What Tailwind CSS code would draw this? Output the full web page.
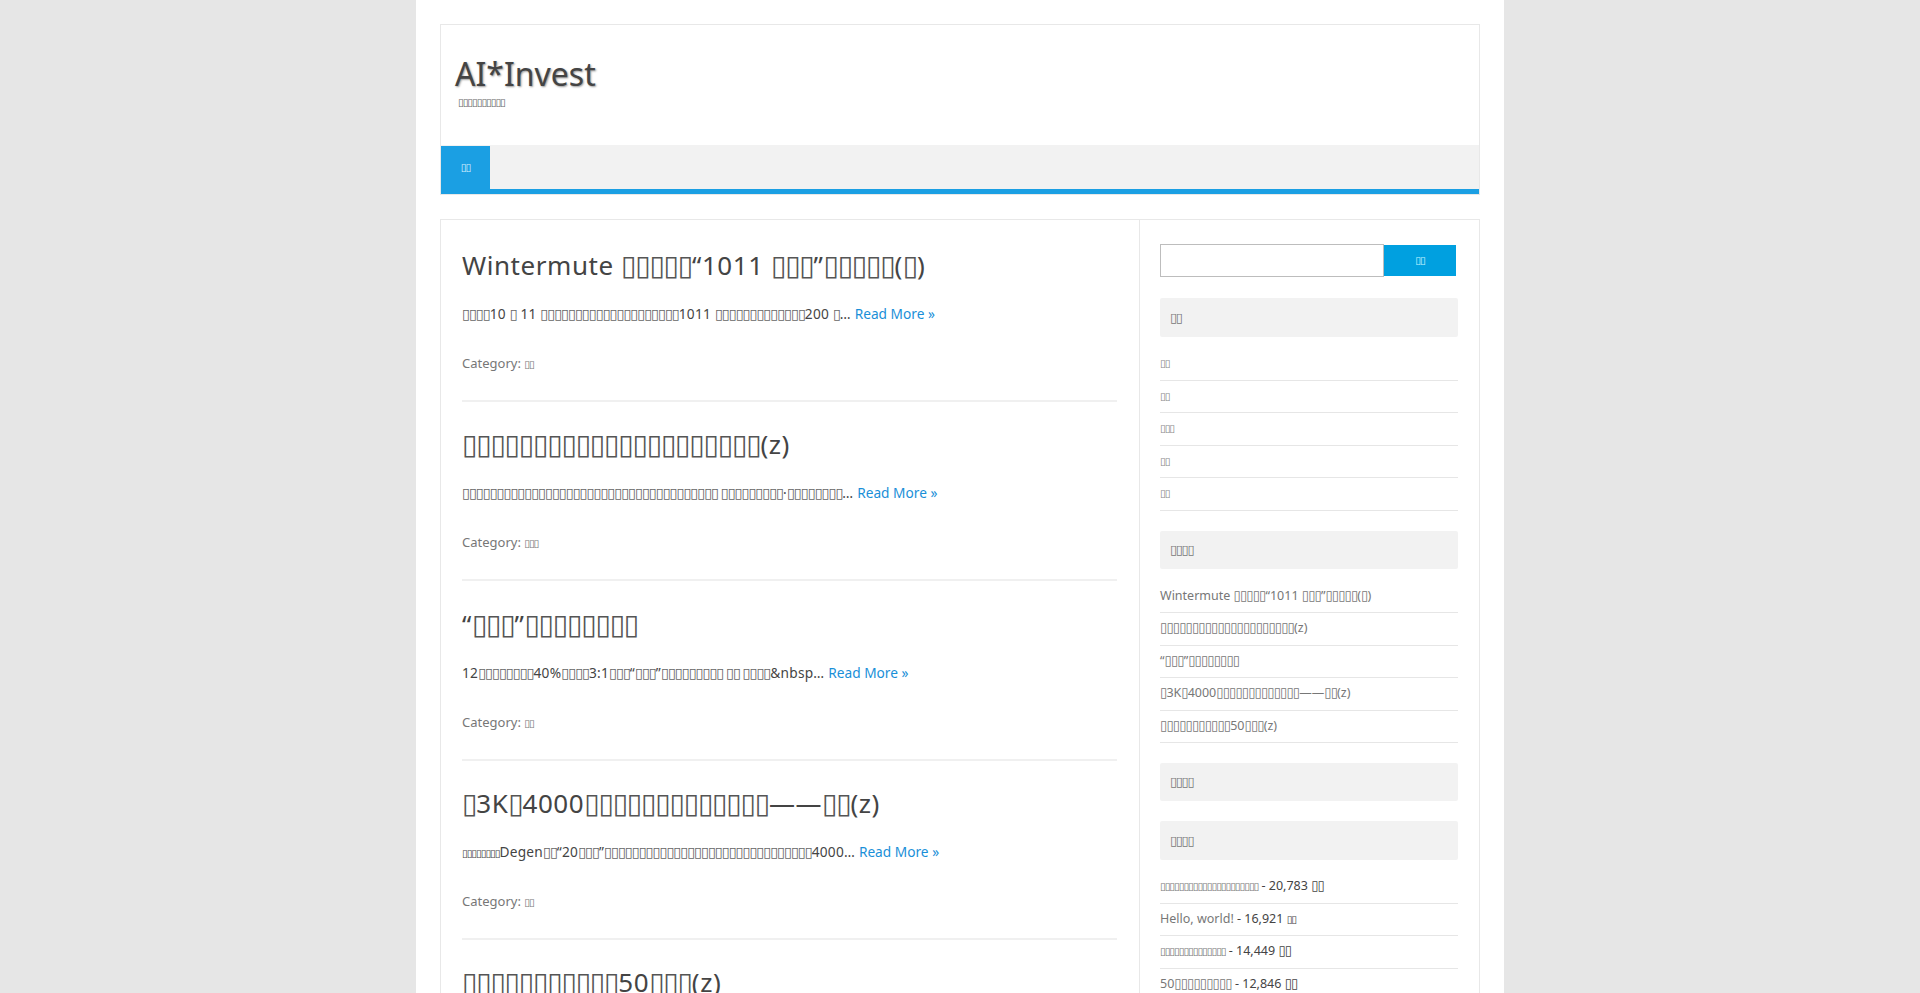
<!DOCTYPE html>
<html lang="zh">
<head>
  <meta charset="UTF-8" />
  <title>AI*Invest</title>
  <script src="https://cdn.jsdelivr.net/npm/@tailwindcss/browser@4"></script>
</head>
<body class="bg-[#e6e6e6] h-screen overflow-hidden font-['Noto_Sans','DejaVu_Sans',sans-serif] text-[#444]">
  <div class="w-[1088px] mx-auto bg-white px-6 pt-6 pb-8">

    <!-- header -->
    <header class="border border-[#e8e8e8] h-[171px] flex flex-col">
      <div class="h-[120px] pl-[14px] pt-[29px]">
        <div class="text-[32px] leading-[40px] text-[#444] [text-shadow:1px_1px_2px_#999]">AI*Invest</div>
        <div class="pl-[3px] mt-[1px] text-[10.5px] tracking-[-1.1px] leading-[14px] text-[#666]">▯▯▯▯▯▯▯▯▯▯</div>
      </div>
      <nav class="flex-1 bg-[#f2f2f2] border-b-[5px] border-[#1b9fe3] flex">
        <a class="w-[49px] mt-px bg-[#1b9fe3] text-[#d8f0ff] text-[10.5px] tracking-[-1.1px] flex items-center justify-center">▯▯</a>
      </nav>
    </header>

    <!-- content box -->
    <div class="mt-6 border border-[#e8e8e8] flex">
      <main class="w-[698px] pl-[21px] pr-[22px] pt-[27px] [&_i]:not-italic [&_i]:leading-none [&_h2]:h-9 [&_h2]:text-[26px] [&_h2]:leading-[36px] [&_h2]:tracking-[0.55px] [&_h2_i]:text-[28px] [&_h2_i]:tracking-[-1.2px] [&_h2_i]:text-[#555] [&_p]:h-6 [&_p]:leading-6 [&_span]:leading-none [&_span]:text-[10.5px] [&_span]:tracking-[-1.1px]">

        <article class="border-b-2 border-[#f0f0f0] pb-[25px] mb-[24.33px]">
          <h2>Wintermute <i>▯▯▯▯▯</i>“1011 <i>▯▯▯</i>”<i>▯▯▯▯▯</i>(<i>▯</i>)</h2>
          <p class="mt-[19px] text-[13.7px] tracking-[0.25px] [&_i]:text-[14.4px] [&_i]:text-[#666] [&_i]:tracking-[-1px] [&_a]:tracking-normal"><i>▯▯▯▯</i>10 <i>▯</i> 11 <i>▯▯▯▯▯▯▯▯▯▯▯▯▯▯▯▯▯▯▯▯</i>1011 <i>▯▯▯▯▯▯▯▯▯▯▯▯▯</i>200 <i>▯</i>… <a class="text-[#1a8fd8]">Read More »</a></p>
          <p class="mt-[25px] text-[13px] text-[#777]">Category: <span>▯▯</span></p>
        </article>

        <article class="border-b-2 border-[#f0f0f0] pb-[25px] mb-[24.33px]">
          <h2><i>▯▯▯▯▯▯▯▯▯▯▯▯▯▯▯▯▯▯▯▯▯</i>(z)</h2>
          <p class="mt-[19px] text-[13.7px] tracking-[0.25px] [&_i]:text-[14.4px] [&_i]:text-[#666] [&_i]:tracking-[-1px] [&_a]:tracking-normal"><i>▯▯▯▯▯▯▯▯▯▯▯▯▯▯▯▯▯▯▯▯▯▯▯▯▯▯▯▯▯▯▯▯▯▯▯▯▯ ▯▯▯▯▯▯▯▯▯</i>·<i>▯▯▯▯▯▯▯▯</i>… <a class="text-[#1a8fd8]">Read More »</a></p>
          <p class="mt-[25px] text-[13px] text-[#777]">Category: <span>▯▯▯</span></p>
        </article>

        <article class="border-b-2 border-[#f0f0f0] pb-[25px] mb-[24.33px]">
          <h2>“<i>▯▯▯</i>”<i>▯▯▯▯▯▯▯▯</i></h2>
          <p class="mt-[19px] text-[13.7px] tracking-[0.25px] [&_i]:text-[14.4px] [&_i]:text-[#666] [&_i]:tracking-[-1px] [&_a]:tracking-normal">12<i>▯▯▯▯▯▯▯▯</i>40%<i>▯▯▯▯</i>3:1<i>▯▯▯</i>“<i>▯▯▯</i>”<i>▯▯▯▯▯▯▯▯▯ ▯▯ ▯▯▯▯</i>&amp;nbsp… <a class="text-[#1a8fd8]">Read More »</a></p>
          <p class="mt-[25px] text-[13px] text-[#777]">Category: <span>▯▯</span></p>
        </article>

        <article class="border-b-2 border-[#f0f0f0] pb-[25px] mb-[24.33px]">
          <h2><i>▯</i>3K<i>▯</i>4000<i>▯▯▯▯▯▯▯▯▯▯▯▯▯</i>——<i>▯▯</i>(z)</h2>
          <p class="mt-[19px] text-[13.7px] tracking-[0.25px] [&_i]:text-[14.4px] [&_i]:text-[#666] [&_i]:tracking-[-1px] [&_a]:tracking-normal"><span>▯▯▯▯▯▯▯▯</span>Degen<i>▯▯</i>“20<i>▯▯▯</i>”<i>▯▯▯▯▯▯▯▯▯▯▯▯▯▯▯▯▯▯▯▯▯▯▯▯▯▯▯▯▯▯</i>4000… <a class="text-[#1a8fd8]">Read More »</a></p>
          <p class="mt-[25px] text-[13px] text-[#777]">Category: <span>▯▯</span></p>
        </article>

        <article class="border-b-2 border-[#f0f0f0] pb-[25px]">
          <h2><i>▯▯▯▯▯▯▯▯▯▯▯</i>50<i>▯▯▯</i>(z)</h2>
        </article>
      </main>

      <!-- sidebar -->
      <aside class="flex-1 border-l border-[#e8e8e8] pl-5 pr-[21px] pt-6 text-[12.5px] text-[#777] [&_i]:not-italic [&_i]:leading-none [&_i]:text-[13.6px] [&_i]:tracking-[-1.1px] [&_span]:leading-none [&_li]:h-[32.5px] [&_li]:leading-[30px] [&_li]:border-b [&_li]:border-[#e6e6e6] [&_li]:whitespace-pre [&_h3]:bg-[#f2f2f2] [&_h3]:rounded-[2px] [&_h3]:pl-[10px] [&_h3]:flex [&_h3]:items-center [&_h3]:text-[13px] [&_h3]:tracking-[-1.35px] [&_h3]:text-[#777] [&_ul]:mb-[20px] [&_b]:font-normal [&_b]:leading-none [&_b]:text-[10.5px] [&_b]:tracking-[-1.1px]">
        <form class="flex items-center w-[296px] mb-[21px]">
          <input class="w-[224px] h-[33px] border border-[#bdbdbd]" />
          <button class="flex-1 h-[31px] bg-[#00a0e0] text-[#c8f4ff] text-[10.5px] tracking-[-1.1px]">▯▯</button>
        </form>

        <h3 class="h-[39px]">▯▯</h3>
        <ul class="mt-[11px] text-[10.5px] tracking-[-1.1px] text-[#888]">
          <li>▯▯</li>
          <li>▯▯</li>
          <li>▯▯▯</li>
          <li>▯▯</li>
          <li>▯▯</li>
        </ul>

        <h3 class="h-[38px]">▯▯▯▯</h3>
        <ul class="mt-[12px]">
          <li>Wintermute <i>▯▯▯▯▯</i>“1011 <i>▯▯▯</i>”<i>▯▯▯▯▯</i>(<i>▯</i>)</li>
          <li><i>▯▯▯▯▯▯▯▯▯▯▯▯▯▯▯▯▯▯▯▯▯</i>(z)</li>
          <li>“<i>▯▯▯</i>”<i>▯▯▯▯▯▯▯▯</i></li>
          <li><i>▯</i>3K<i>▯</i>4000<i>▯▯▯▯▯▯▯▯▯▯▯▯▯</i>——<i>▯▯</i>(z)</li>
          <li><i>▯▯▯▯▯▯▯▯▯▯▯</i>50<i>▯▯▯</i>(z)</li>
        </ul>

        <h3 class="h-[38px] mb-5">▯▯▯▯</h3>

        <h3 class="h-[39px]">▯▯▯▯</h3>
        <ul class="mt-[11px]">
          <li><b>▯▯▯▯▯▯▯▯▯▯▯▯▯▯▯▯▯▯▯▯▯</b><span class="text-[#444]"> - 20,783 <i>▯▯</i></span></li>
          <li>Hello, world!<span class="text-[#444]"> - 16,921 <b>▯▯</b></span></li>
          <li><b>▯▯▯▯▯▯▯▯▯▯▯▯▯▯</b><span class="text-[#444]"> - 14,449 <i>▯▯</i></span></li>
          <li>50<i>▯▯▯▯▯▯▯▯▯</i><span class="text-[#444]"> - 12,846 <i>▯▯</i></span></li>
        </ul>
      </aside>
    </div>
  </div>
</body>
</html>
